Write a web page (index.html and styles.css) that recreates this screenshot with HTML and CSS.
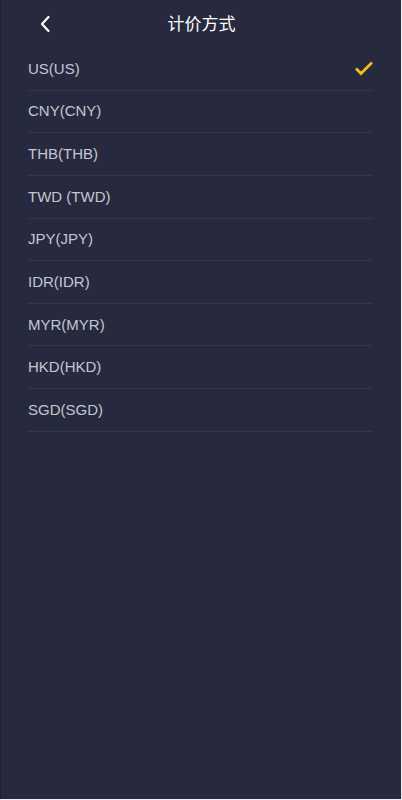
FILE: index.html
```html
<!DOCTYPE html>
<html lang="zh">
<head>
<meta charset="utf-8">
<title>计价方式</title>
<link rel="stylesheet" href="styles.css">
</head>
<body>
<div class="app">
  <header class="header">
    <span class="back">
      <svg width="12" height="18" viewBox="0 0 12 18"><path d="M9.5 2 L3 9 L9.5 16" fill="none" stroke="#ffffff" stroke-width="2.2" stroke-linecap="round" stroke-linejoin="round"/></svg>
    </span>
    <h1 class="title">计价方式</h1>
  </header>
  <ul class="list">
    <li class="item"><span>US(US)</span>
      <svg class="check" width="20" height="16" viewBox="0 0 20 16"><path d="M2 8.5 L7 13.5 L18 2.5" fill="none" stroke="#f5bd1a" stroke-width="2.8" stroke-linejoin="miter"/></svg>
    </li>
    <li class="item"><span>CNY(CNY)</span></li>
    <li class="item"><span>THB(THB)</span></li>
    <li class="item"><span>TWD (TWD)</span></li>
    <li class="item"><span>JPY(JPY)</span></li>
    <li class="item"><span>IDR(IDR)</span></li>
    <li class="item"><span>MYR(MYR)</span></li>
    <li class="item"><span>HKD(HKD)</span></li>
    <li class="item"><span>SGD(SGD)</span></li>
  </ul>
</div>
</body>
</html>
```
FILE: styles.css
```css
html, body {
  margin: 0;
  padding: 0;
  background: #eef0f6;
}
body {
  font-family: "Liberation Sans", Arial, "Noto Sans CJK SC", sans-serif;
}
.app {
  width: 400px;
  height: 799px;
  background: #272a3e;
  border-left: 1px solid #1e2032;
  box-sizing: content-box;
}
.header {
  height: 48px;
  display: flex;
  align-items: center;
  justify-content: center;
  position: relative;
}
.back {
  position: absolute;
  left: 38px;
  top: 15px;
  display: flex;
}
.title {
  margin: 0;
  font-family: "Noto Sans CJK SC", sans-serif;
  font-size: 17px;
  font-weight: 400;
  color: #ffffff;
  margin-left: 1px;
  margin-top: -4px;
}
.list {
  list-style: none;
  margin: 0;
  padding: 0 28px 0 27px;
}
.item {
  height: 42.625px;
  box-sizing: border-box;
  border-bottom: 1px solid #34374b;
  display: flex;
  align-items: center;
  justify-content: space-between;
  font-size: 15px;
  color: #c3c6d2;
  padding-bottom: 1px;
}
.check {
  margin-right: -1px;
}
```
